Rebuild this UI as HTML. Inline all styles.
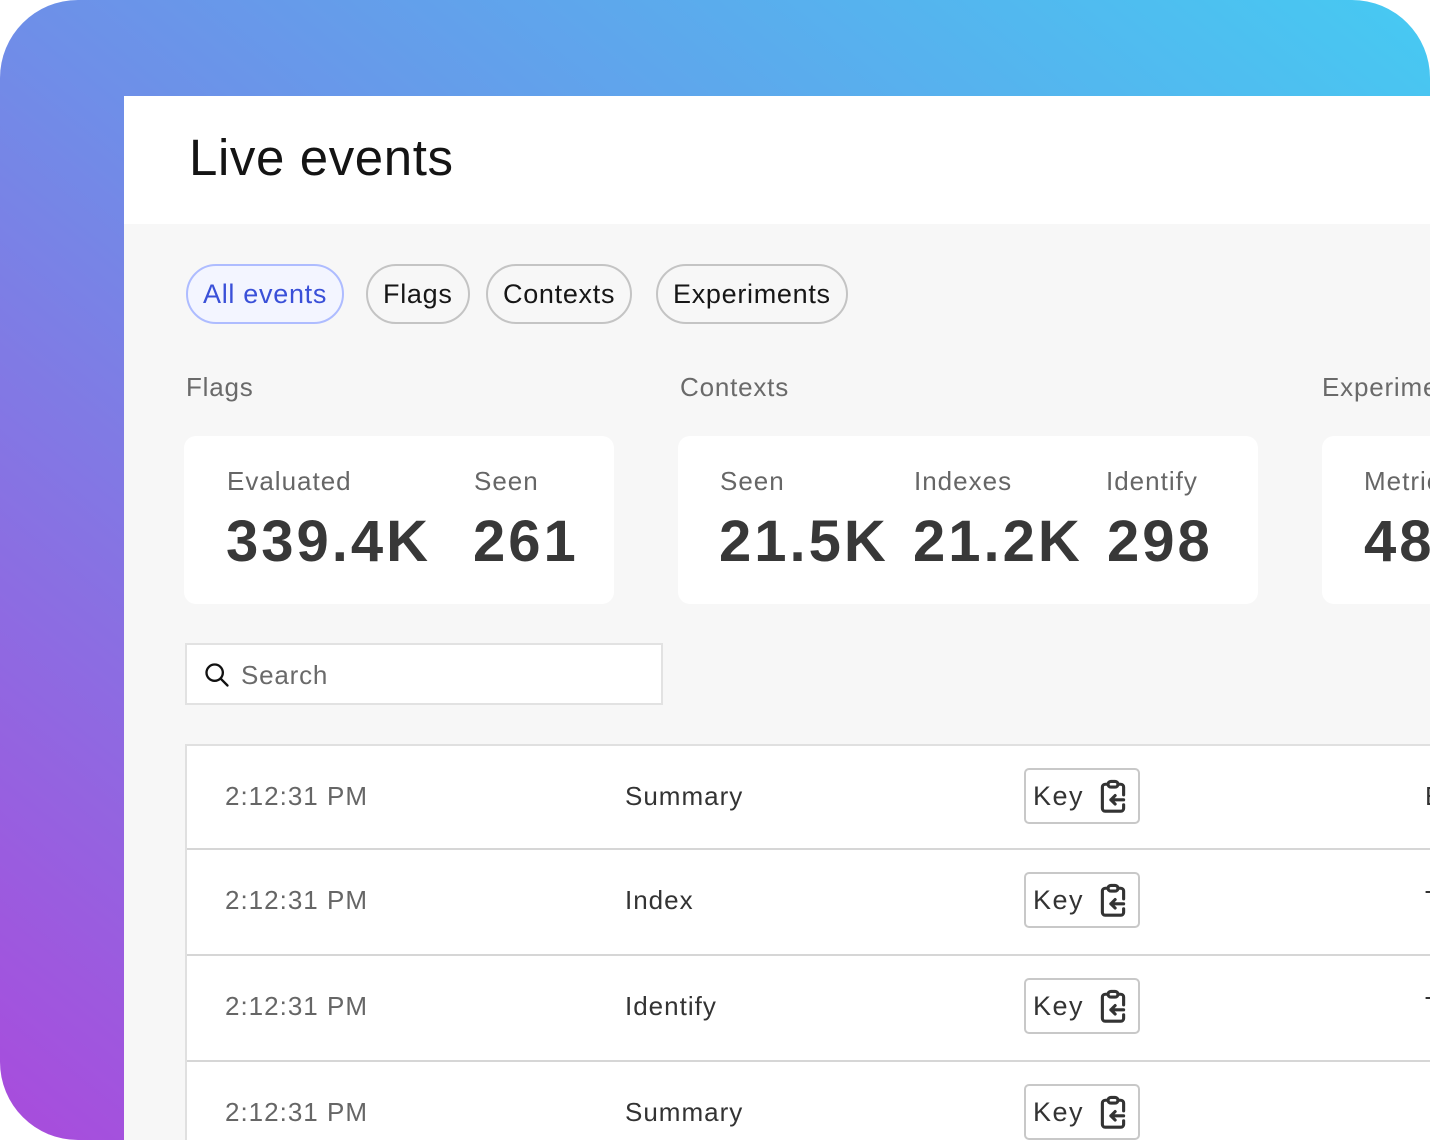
<!DOCTYPE html>
<html><head><meta charset="utf-8"><style>
*{margin:0;padding:0;box-sizing:border-box}
html,body{width:1430px;height:1140px;overflow:hidden}
body{background:#fff;font-family:"Liberation Sans",sans-serif;position:relative}
.bg{position:absolute;left:0;top:0;width:1430px;height:1140px;border-radius:78px;background:linear-gradient(to top right,#a94bdc 0%,#6e8fe8 50%,#46caf2 100%)}
.panel{position:absolute;left:124px;top:96px;width:1306px;height:1044px;background:#f7f7f7;overflow:hidden}
.head{position:absolute;left:0;top:0;width:100%;height:128px;background:#fff}
.abs{position:absolute;white-space:nowrap}
h1{position:absolute;left:65px;top:32px;font-size:51px;font-weight:400;color:#141414;letter-spacing:0.6px}
.tab{position:absolute;top:168px;height:60px;border:2px solid #c4c4c4;border-radius:30px;font-size:27px;color:#161616;line-height:56px;padding:0 15px;background:#f7f7f7;letter-spacing:0.7px}
.tab.on{border-color:#aebcff;background:#f3f5ff;color:#3a50d8}
.sec{font-size:26px;color:#6a6a6a;top:276px;letter-spacing:0.8px}
.card{position:absolute;top:340px;height:168px;background:#fff;border-radius:12px}
.lbl{font-size:26px;color:#666;top:30px;letter-spacing:1px}
.num{font-size:58px;color:#383838;font-weight:700;top:72px;letter-spacing:3px}
.search{position:absolute;left:61px;top:547px;width:478px;height:62px;border:2px solid #e2e2e2;background:#fff}
.table{position:absolute;left:61px;top:648px;width:1300px;height:396px;background:#fff;border-left:2px solid #e0e0e0;border-top:2px solid #e0e0e0;overflow:hidden}
.row{position:absolute;left:0;width:100%;height:106px;border-bottom:2px solid #d6d6d6}
.t{left:38px;font-size:26px;color:#666;top:35px;letter-spacing:1px}
.e{left:438px;font-size:26px;color:#333;top:35px;letter-spacing:1px}
.key{position:absolute;left:837px;top:22px;width:116px;height:56px;border:2px solid #c8c8c8;border-radius:5px;font-size:27px;color:#333;line-height:52px;padding-left:7px;letter-spacing:1.5px}
.key svg{position:absolute;left:70px;top:8px}
.x{left:1238px;font-size:26px;color:#333;top:35px}
</style></head><body>
<div class="bg"></div>
<div class="panel">
<div class="head"><h1>Live events</h1></div>
<div class="tab on" style="left:62px">All events</div>
<div class="tab" style="left:242px">Flags</div>
<div class="tab" style="left:362px">Contexts</div>
<div class="tab" style="left:532px">Experiments</div>
<div class="abs sec" style="left:62px">Flags</div>
<div class="abs sec" style="left:556px">Contexts</div>
<div class="abs sec" style="left:1198px">Experiments</div>
<div class="card" style="left:60px;width:430px">
<div class="abs lbl" style="left:43px">Evaluated</div><div class="abs lbl" style="left:290px">Seen</div>
<div class="abs num" style="left:42px">339.4K</div><div class="abs num" style="left:289px">261</div></div>
<div class="card" style="left:554px;width:580px">
<div class="abs lbl" style="left:42px">Seen</div><div class="abs lbl" style="left:236px">Indexes</div><div class="abs lbl" style="left:428px">Identify</div>
<div class="abs num" style="left:41px">21.5K</div><div class="abs num" style="left:235px">21.2K</div><div class="abs num" style="left:429px">298</div></div>
<div class="card" style="left:1198px;width:300px">
<div class="abs lbl" style="left:42px">Metrics</div><div class="abs num" style="left:42px">48</div></div>
<div class="search">
<svg class="abs" style="left:16px;top:16px" width="28" height="28" viewBox="0 0 24 24" fill="none" stroke="#111" stroke-width="2" stroke-linecap="round"><circle cx="10" cy="10" r="7"/><path d="M15.5 15.5L21 21"/></svg>
<div class="abs" style="left:54px;top:15px;font-size:26px;color:#6a6a6a;letter-spacing:0.8px">Search</div></div>
<div class="table">
<div class="row" style="top:0;height:104px"><div class="abs t">2:12:31 PM</div><div class="abs e">Summary</div><div class="key">Key<svg width="34" height="38" viewBox="0 0 24 26" fill="none" stroke="#333" stroke-width="2.2" stroke-linecap="round" stroke-linejoin="round"><rect x="8.5" y="2" width="7" height="4" rx="2"/><path d="M8.5 4H6.5a2 2 0 0 0-2 2v15a2 2 0 0 0 2 2h11a2 2 0 0 0 2-2v-2.5M19.5 11.5V6a2 2 0 0 0-2-2h-2M19.5 15H10.5M13.5 12l-3 3 3 3"/></svg></div><div class="abs x">E</div></div>
<div class="row" style="top:104px"><div class="abs t">2:12:31 PM</div><div class="abs e">Index</div><div class="key">Key<svg width="34" height="38" viewBox="0 0 24 26" fill="none" stroke="#333" stroke-width="2.2" stroke-linecap="round" stroke-linejoin="round"><rect x="8.5" y="2" width="7" height="4" rx="2"/><path d="M8.5 4H6.5a2 2 0 0 0-2 2v15a2 2 0 0 0 2 2h11a2 2 0 0 0 2-2v-2.5M19.5 11.5V6a2 2 0 0 0-2-2h-2M19.5 15H10.5M13.5 12l-3 3 3 3"/></svg></div><div class="abs x">T</div></div>
<div class="row" style="top:210px"><div class="abs t">2:12:31 PM</div><div class="abs e">Identify</div><div class="key">Key<svg width="34" height="38" viewBox="0 0 24 26" fill="none" stroke="#333" stroke-width="2.2" stroke-linecap="round" stroke-linejoin="round"><rect x="8.5" y="2" width="7" height="4" rx="2"/><path d="M8.5 4H6.5a2 2 0 0 0-2 2v15a2 2 0 0 0 2 2h11a2 2 0 0 0 2-2v-2.5M19.5 11.5V6a2 2 0 0 0-2-2h-2M19.5 15H10.5M13.5 12l-3 3 3 3"/></svg></div><div class="abs x">T</div></div>
<div class="row" style="top:316px;border-bottom:none"><div class="abs t">2:12:31 PM</div><div class="abs e">Summary</div><div class="key">Key<svg width="34" height="38" viewBox="0 0 24 26" fill="none" stroke="#333" stroke-width="2.2" stroke-linecap="round" stroke-linejoin="round"><rect x="8.5" y="2" width="7" height="4" rx="2"/><path d="M8.5 4H6.5a2 2 0 0 0-2 2v15a2 2 0 0 0 2 2h11a2 2 0 0 0 2-2v-2.5M19.5 11.5V6a2 2 0 0 0-2-2h-2M19.5 15H10.5M13.5 12l-3 3 3 3"/></svg></div></div>
</div>
</div>
</body></html>
